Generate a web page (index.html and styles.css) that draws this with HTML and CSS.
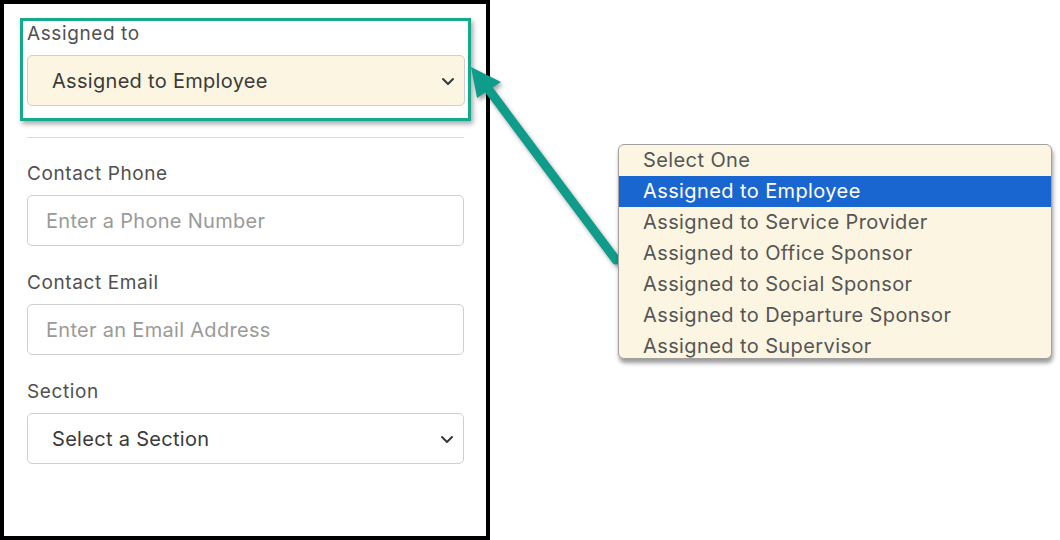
FILE: index.html
```html
<!DOCTYPE html>
<html>
<head>
<meta charset="utf-8">
<link rel="stylesheet" href="styles.css">
</head>
<body>
<div class="stage">
  <div class="panel">
    <div class="highlight">
      <label class="label">Assigned to</label>
      <div class="select filled"><span>Assigned to Employee</span>
        <svg class="chev" viewBox="0 0 16 16"><path d="M3 6l5 5 5-5" fill="none" stroke="#343a40" stroke-width="2" stroke-linecap="round" stroke-linejoin="round"/></svg>
      </div>
    </div>
    <hr class="sep">
    <div class="group">
      <label class="label">Contact Phone</label>
      <div class="input">Enter a Phone Number</div>
    </div>
    <div class="group">
      <label class="label">Contact Email</label>
      <div class="input">Enter an Email Address</div>
    </div>
    <div class="group">
      <label class="label">Section</label>
      <div class="select"><span>Select a Section</span>
        <svg class="chev" viewBox="0 0 16 16"><path d="M3 6l5 5 5-5" fill="none" stroke="#343a40" stroke-width="2" stroke-linecap="round" stroke-linejoin="round"/></svg>
      </div>
    </div>
  </div>

  <svg class="arrow" width="1060" height="540" viewBox="0 0 1060 540">
    <line x1="616" y1="260" x2="486" y2="86" stroke="#0f9c8a" stroke-width="9" stroke-linecap="round"/>
    <polygon points="471,67 501,82 477,98" fill="#0f9c8a"/>
  </svg>

  <div class="dropdown">
    <div class="opt">Select One</div>
    <div class="opt active">Assigned to Employee</div>
    <div class="opt">Assigned to Service Provider</div>
    <div class="opt">Assigned to Office Sponsor</div>
    <div class="opt">Assigned to Social Sponsor</div>
    <div class="opt">Assigned to Departure Sponsor</div>
    <div class="opt">Assigned to Supervisor</div>
  </div>
</div>
</body>
</html>
```

FILE: styles.css
```css
* { box-sizing: border-box; }
html, body { margin: 0; padding: 0; background: #fff; }
body { font-family: Inter, "Open Sans", sans-serif; }
.stage { position: relative; width: 1060px; height: 540px; overflow: hidden; }
.panel {
  width: 490px; height: 540px;
  border: 4px solid #000;
  padding: 14px 22px 0 23px;
}
.highlight {
  margin: 0 -7px 0 -7px;
  border: 3px solid #14ab8c;
  padding: 0 3px 12px 4px;
  box-shadow: 2px 3px 5px rgba(0,0,0,0.35);
}
.label {
  display: block;
  font-size: 19px;
  letter-spacing: 0.6px;
  line-height: 27px;
  color: #505050;
  margin-bottom: 8px;
}
.highlight .label { line-height: 26px; }
.select, .input {
  height: 51px;
  border: 1px solid #cfcfcf;
  border-radius: 5px;
  display: flex;
  align-items: center;
  font-size: 20px;
  letter-spacing: 0.3px;
  background: #fff;
}
.select { padding-left: 24px; color: #3a3a3a; position: relative; }
.select.filled { background: #fcf5e1; }
.input { padding-left: 18px; color: #9a9a9a; }
.chev { position: absolute; right: 8px; top: 17px; width: 16px; height: 16px; }
.sep { border: 0; border-top: 1px solid #dcdcdc; margin: 16px 0 22px 0; height: 0; }
.group { margin-bottom: 23px; }
.arrow { position: absolute; left: 0; top: 0; filter: drop-shadow(2px 3px 2px rgba(0,0,0,0.35)); }
.dropdown {
  position: absolute; left: 618px; top: 144px; width: 434px; height: 215px;
  background: #fcf5e1;
  border: 1px solid #a0a0a0;
  border-radius: 6px;
  overflow: hidden;
  box-shadow: 1px 4px 4px rgba(0,0,0,0.4);
}
.opt {
  height: 31px; line-height: 31px;
  padding-left: 24px;
  font-size: 20px;
  letter-spacing: 0.4px;
  color: #555;
  white-space: nowrap;
}
.opt.active { background: #1a66d1; color: #fff; }
```
